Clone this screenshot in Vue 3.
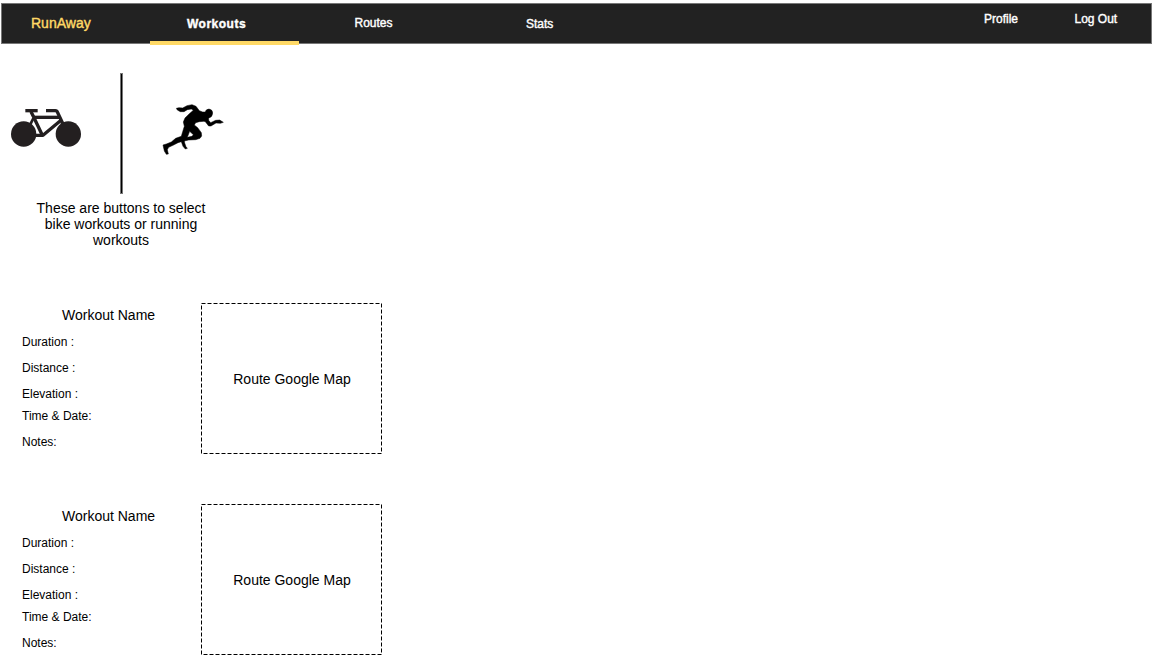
<script setup>
const tabs = [
  { label: 'Workouts', cls: 'tab active' },
  { label: 'Routes', cls: 'tab routes' },
  { label: 'Stats', cls: 'tab stats' },
]
const workouts = [1, 2]
const fields = ['Duration :', 'Distance :', 'Elevation :', 'Time & Date:', 'Notes:']
</script>

<template>
  <div class="page">
    <header class="nav">
      <div class="brand">RunAway</div>
      <nav class="tabs">
        <div v-for="t in tabs" :key="t.label" :class="t.cls"><span>{{ t.label }}</span></div>
      </nav>
      <div class="account">
        <span class="profile">Profile</span>
        <span>Log Out</span>
      </div>
    </header>

    <section class="picker">
      <svg class="bike" width="100" height="65" viewBox="0 0 300 195" fill="none" stroke="#231f20">
        <circle cx="71" cy="117" r="38" fill="#231f20" stroke="none" />
        <circle cx="205" cy="117" r="38" fill="#231f20" stroke="none" />
        <path d="M76 47H113" stroke-width="10" />
        <path d="M93 50L101 66L127 121" stroke-width="10" />
        <path d="M100 70L84 102" stroke-width="8" />
        <path d="M99 67H177" stroke-width="10" />
        <path d="M106 121H129L183 76" stroke-width="10" stroke-linejoin="round" />
        <path d="M138 47H166Q171 47 173 53L189 87" stroke-width="10" />
      </svg>
      <div class="divider"></div>
      <svg class="runner" width="90" height="70" viewBox="0 0 270 210" fill="#000">
        <path d="M79 40L87 38L98 39L111 32L126 29L138 34L148 47L158 51L166 51Q167 43 177 42Q188 44 188 54Q187 67 176 69L176 76L182 83L197 76L209 75L220 82L211 85L198 84L183 93L176 93L166 80L162 79L148 80L137 83L133 90L143 98L154 113L155 123L150 130L137 134L116 135L103 138L104 144L108 155L112 160L106 162L99 154L94 140L84 143L69 151L56 157L52 164L55 177L49 178L43 168L39 150L49 147L64 141L77 130L94 124L98 110L103 94L100 81L105 69L118 56L130 46L124 42L112 44L102 50L91 50L82 45ZM119 109L112 127L126 124L130 119Z" fill-rule="evenodd" stroke="#000" stroke-width="1.5" stroke-linejoin="round" />
      </svg>
    </section>
    <p class="hint">These are buttons to select<br />bike workouts or running<br />workouts</p>

    <main class="list">
      <article v-for="w in workouts" :key="w" class="workout">
        <div class="details">
          <h2>Workout Name</h2>
          <ul>
            <li v-for="f in fields" :key="f">{{ f }}</li>
          </ul>
        </div>
        <div class="map">
          <svg class="outline" width="182" height="152" fill="none" stroke="#000">
            <rect x="0.5" y="0.5" width="180" height="150" stroke-dasharray="4 2" />
          </svg>
          <span>Route Google Map</span>
        </div>
      </article>
    </main>
  </div>
</template>

<style>
body {
  margin: 0;
  background: #fff;
  overflow: hidden;
}
</style>

<style scoped>
.page {
  box-sizing: border-box;
  width: 1152px;
  height: 659px;
  padding-top: 3px;
  overflow: hidden;
  font-family: "Liberation Sans", Helvetica, Arial, sans-serif;
  color: #000;
}
.nav {
  box-sizing: border-box;
  display: flex;
  width: 1151px;
  height: 41px;
  margin-left: 1px;
  border: 1px solid #777;
  background: #222;
  color: #fff;
  font-size: 12px;
  line-height: 14px;
  -webkit-text-stroke: 0.4px currentColor;
}
.brand {
  width: 119px;
  padding: 11px 0 0 29px;
  color: #ffd966;
  font-size: 14px;
  line-height: 16px;
}
.tabs {
  display: flex;
  flex: 1;
}
.tab {
  box-sizing: border-box;
  height: 41px;
  padding-top: 12px;
}
.active {
  width: 149px;
  padding-left: 37px;
  border-bottom: 4px solid #ffd966;
  font-weight: bold;
  letter-spacing: 0.5px;
}
.active span {
  display: block;
  padding-top: 1px;
}
.routes {
  width: 172px;
  padding-left: 55.5px;
}
.stats {
  padding-top: 13px;
  padding-left: 55px;
}
.account {
  display: flex;
  width: 167px;
  padding-top: 8px;
}
.profile {
  width: 90.5px;
}
.picker {
  display: flex;
  height: 121px;
  margin-top: 29px;
}
.bike {
  margin-top: 22px;
}
.divider {
  box-sizing: border-box;
  width: 3px;
  height: 121px;
  margin-left: 20px;
  border: 1px solid #777;
  background: #000;
}
.runner {
  margin: 22px 0 0 27px;
}
.hint {
  width: 242px;
  margin: 6px 0 0;
  text-align: center;
  font-size: 14px;
  line-height: 16px;
}
.list {
  margin-top: 55px;
}
.workout {
  display: flex;
  height: 151px;
  margin-bottom: 50px;
}
.details {
  width: 179px;
  padding-left: 22px;
}
h2 {
  margin: 4px 0 12px 40px;
  font-size: 14px;
  font-weight: normal;
  line-height: 16px;
}
ul {
  margin: 0;
  padding: 0;
  list-style: none;
}
li {
  height: 26px;
  font-size: 12px;
  line-height: 14px;
}
li:nth-child(3) {
  height: 22px;
}
.map {
  display: flex;
  position: relative;
  width: 182px;
  height: 152px;
  align-items: center;
  justify-content: center;
  font-size: 14px;
  line-height: 16px;
}
.outline {
  position: absolute;
  inset: 0;
}
</style>
